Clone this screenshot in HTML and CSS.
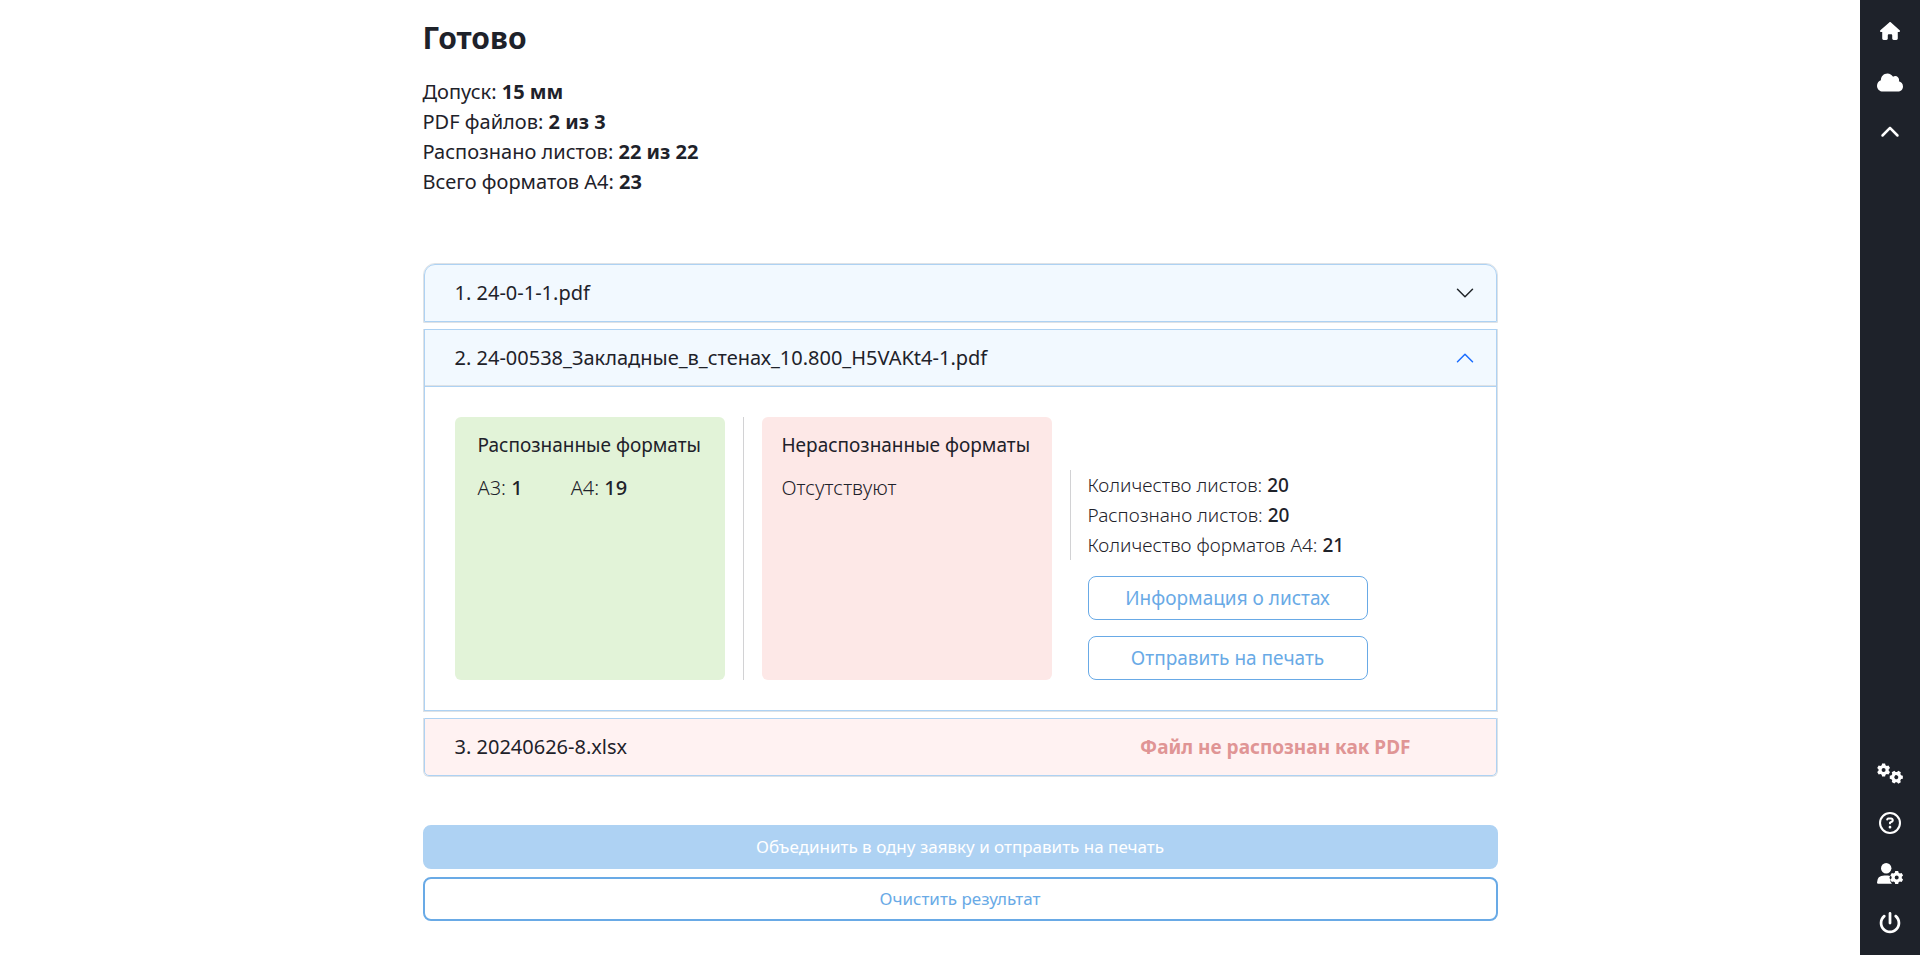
FILE: index.html
```
<!DOCTYPE html>
<html lang="ru">
<head>
<meta charset="utf-8">
<meta name="viewport" content="width=device-width, initial-scale=1">
<title>Готово</title>
<link rel="stylesheet" href="styles.css">
</head>
<body>
<main class="container">
  <h1 class="title">Готово</h1>
  <div class="summary">
    <div>Допуск: <b>15 мм</b></div>
    <div>PDF файлов: <b>2 из 3</b></div>
    <div>Распознано листов: <b>22 из 22</b></div>
    <div>Всего форматов А4: <b>23</b></div>
  </div>

  <div class="accordion">
    <section class="item item-first">
      <button class="item-header" type="button" aria-expanded="false">
        <span>1. 24-0-1-1.pdf</span>
        <svg class="chevron" viewBox="0 0 16 16" aria-hidden="true"><path d="M2 5l6 6 6-6"/></svg>
      </button>
    </section>

    <section class="item">
      <button class="item-header item-header-open" type="button" aria-expanded="true">
        <span>2. 24-00538_Закладные_в_стенах_10.800_H5VAKt4-1.pdf</span>
        <svg class="chevron chevron-open" viewBox="0 0 16 16" aria-hidden="true"><path d="M2 11l6-6 6 6"/></svg>
      </button>
      <div class="item-body">
        <div class="formats formats-ok">
          <h2 class="formats-title">Распознанные форматы</h2>
          <div class="formats-list">
            <span>А3: <b>1</b></span>
            <span>А4: <b>19</b></span>
          </div>
        </div>
        <div class="divider"></div>
        <div class="formats formats-bad">
          <h2 class="formats-title">Нераспознанные форматы</h2>
          <div class="formats-list">Отсутствуют</div>
        </div>
        <div class="details">
          <div class="details-text">
            <div>Количество листов: <b>20</b></div>
            <div>Распознано листов: <b>20</b></div>
            <div>Количество форматов А4: <b>21</b></div>
          </div>
          <div class="details-actions">
            <button class="btn" type="button">Информация о листах</button>
            <button class="btn" type="button">Отправить на печать</button>
          </div>
        </div>
      </div>
    </section>

    <section class="item item-last">
      <div class="item-header item-header-error">
        <span>3. 20240626-8.xlsx</span>
        <strong class="error-text">Файл не распознан как PDF</strong>
      </div>
    </section>
  </div>

  <div class="actions">
    <button class="btn btn-primary" type="button">Объединить в одну заявку и отправить на печать</button>
    <button class="btn btn-outline" type="button">Очистить результат</button>
  </div>
</main>

<nav class="sidebar" aria-label="Меню">
  <div class="sidebar-group">
    <a href="#" class="nav-link" aria-label="Главная"><svg class="icon" viewBox="0 0 576 512"><path d="M575.8 255.5c0 18-15 32.1-32 32.1h-32l.7 160.2c0 2.700-.2 5.400-.5 8.100V472c0 22.100-17.900 40-40 40H456c-1.100 0-2.200 0-3.300-.1c-1.400 .1-2.800 .1-4.200 .1H416 392c-22.100 0-40-17.900-40-40V448 384c0-17.700-14.300-32-32-32H256c-17.700 0-32 14.300-32 32v64 24c0 22.100-17.900 40-40 40H160 128.100c-1.500 0-3-.1-4.500-.2c-1.200 .1-2.400 .2-3.600 .2H104c-22.100 0-40-17.900-40-40V360c0-.9 0-1.900 .1-2.800V287.600H32c-18 0-32-14-32-32.100c0-9 3-17 10-24L266.400 8c7-7 15-8 22-8s15 2 21 7L564.800 231.500c8 7 12 15 11 24z"/></svg></a>
    <a href="#" class="nav-link" aria-label="Облако"><svg class="icon icon-wide" viewBox="0 0 640 512"><path d="M0 336c0 79.500 64.500 144 144 144H512c70.700 0 128-57.300 128-128c0-61.900-44-113.600-102.400-125.400c4.100-10.700 6.400-22.400 6.400-34.600c0-53-43-96-96-96c-19.700 0-38.100 6-53.300 16.200C367 64.200 315.300 32 256 32C167.600 32 96 103.600 96 192c0 2.700 .1 5.400 .2 8.100C40.200 219.800 0 273.200 0 336z"/></svg></a>
    <a href="#" class="nav-link" aria-label="Свернуть"><svg class="icon" viewBox="0 0 512 512"><path d="M233.400 105.400c12.500-12.500 32.800-12.500 45.300 0l192 192c12.500 12.500 12.500 32.800 0 45.300s-32.800 12.500-45.300 0L256 173.300 86.600 342.600c-12.500 12.500-32.800 12.500-45.300 0s-12.500-32.800 0-45.300l192-192z"/></svg></a>
  </div>
  <div class="sidebar-group">
    <a href="#" class="nav-link" aria-label="Настройки"><svg class="icon icon-wide" viewBox="0 0 26 21"><g transform="translate(6.600 7)"><path fill-rule="evenodd" d="M-1.500-6.500h3l.4 1.700 1.300.7 1.700-.5 1.500 2.600-1.300 1.200v1.600l1.300 1.200-1.500 2.600-1.700-.5-1.300.7-.4 1.700h-3l-.4-1.700-1.300-.7-1.700.5L-6.400 2l1.300-1.200V-.8L-6.400-2l1.500-2.600 1.700.5 1.300-.7zM0-2a2 2 0 1 0 0 4 2 2 0 0 0 0-4z"/></g><g transform="translate(19.300 14.200) rotate(30)"><path fill-rule="evenodd" d="M-1.500-6.500h3l.4 1.700 1.300.7 1.700-.5 1.500 2.600-1.300 1.200v1.600l1.300 1.200-1.500 2.600-1.700-.5-1.300.7-.4 1.700h-3l-.4-1.700-1.300-.7-1.700.5L-6.400 2l1.300-1.200V-.8L-6.400-2l1.500-2.600 1.700.5 1.300-.7zM0-2a2 2 0 1 0 0 4 2 2 0 0 0 0-4z"/></g></svg></a>
    <a href="#" class="nav-link" aria-label="Помощь"><svg class="icon icon-round" viewBox="0 0 512 512"><path d="M464 256A208 208 0 1 0 48 256a208 208 0 1 0 416 0zM0 256a256 256 0 1 1 512 0A256 256 0 1 1 0 256zm169.800-90.700c7.900-22.300 29.100-37.300 52.800-37.300h58.300c34.900 0 63.100 28.300 63.100 63.100c0 22.600-12.100 43.500-31.700 54.800L280 264.400c-.2 13-10.900 23.600-24 23.600c-13.300 0-24-10.700-24-24V250.500c0-8.600 4.600-16.500 12.100-20.800l44.300-25.400c4.700-2.700 7.600-7.700 7.600-13.100c0-8.400-6.800-15.100-15.100-15.100H222.600c-3.400 0-6.400 2.100-7.500 5.300l-.4 1.200c-4.400 12.500-18.200 19-30.600 14.600s-19-18.200-14.600-30.600l.4-1.200zM224 352a32 32 0 1 1 64 0 32 32 0 1 1-64 0z"/></svg></a>
    <a href="#" class="nav-link" aria-label="Профиль"><svg class="icon icon-wide" viewBox="0 0 26 21"><circle cx="9.200" cy="5.200" r="5.200"/><path d="M7.400 12.500h3.400q1.300 0 2.500.4-1.300 1-.6 2.600l.9 1.200q-.9 2 .8 3.400l.5.700H1.200Q0 20.800 0 19.600 0 12.500 7.400 12.500z"/><g transform="translate(19.700 14.500)"><path fill-rule="evenodd" d="M-1.500-6.500h3l.4 1.700 1.300.7 1.700-.5 1.500 2.600-1.300 1.200v1.600l1.300 1.200-1.500 2.600-1.700-.5-1.300.7-.4 1.700h-3l-.4-1.700-1.300-.7-1.700.5L-6.400 2l1.300-1.200V-.8L-6.400-2l1.500-2.600 1.700.5 1.300-.7zM0-2a2 2 0 1 0 0 4 2 2 0 0 0 0-4z"/></g></svg></a>
    <a href="#" class="nav-link" aria-label="Выход"><svg class="icon icon-round" viewBox="0 0 512 512"><path d="M288 32c0-17.700-14.300-32-32-32s-32 14.300-32 32V256c0 17.700 14.300 32 32 32s32-14.300 32-32V32zM143.500 120.600c13.600-11.300 15.400-31.500 4.100-45.100s-31.500-15.400-45.100-4.100C49.700 115.400 16 181.800 16 256c0 132.500 107.500 240 240 240s240-107.500 240-240c0-74.200-33.800-140.600-86.600-184.600c-13.600-11.300-33.800-9.400-45.100 4.100s-9.400 33.800 4.100 45.100c38.900 32.300 63.500 81 63.500 135.400c0 97.200-78.800 176-176 176s-176-78.800-176-176c0-54.400 24.700-103.100 63.500-135.400z"/></svg></a>
  </div>
</nav>
</body>
</html>
```
FILE: styles.css
```
*, *::before, *::after {
  box-sizing: border-box;
}

body {
  margin: 0;
  background: #fff;
  color: #1e222a;
  font: 400 20px/30px "Noto Sans", "Open Sans", sans-serif;
}

button {
  font: inherit;
  color: inherit;
  cursor: pointer;
}

b {
  font-weight: 700;
}

.container {
  max-width: 1075px;
  margin: 0 auto;
  padding: 16px 0 32px;
}

.title {
  margin: 0 0 17px;
  font-size: 30px;
  line-height: 44px;
  font-weight: 700;
}

.accordion {
  display: flex;
  flex-direction: column;
  gap: 6px;
  margin-top: 66px;
}

.item {
  border: 1px solid #dee2e6;
  border-top: 0;
}

.item-first {
  border-top: 1px solid #dee2e6;
  border-radius: 12px 12px 0 0;
}

.item-last {
  border-radius: 0 0 6px 6px;
}

.item-header {
  display: flex;
  align-items: center;
  justify-content: space-between;
  width: 100%;
  padding: 13px 21px 13px 30px;
  border: 1px solid #aed2f3;
  background: #f2f9ff;
  text-align: left;
}

.item-first .item-header {
  border-radius: 11px 11px 0 0;
}

.item-header-open {
  box-shadow: inset 0 -1px 0 #dee2e6;
}

.item-header-error {
  padding-right: 85px;
  border-radius: 0 0 5px 5px;
  background: #fff2f2;
}

.error-text {
  color: #e09595;
  font-size: 19px;
}

.chevron {
  width: 20px;
  height: 20px;
  fill: none;
  stroke: #212529;
  stroke-width: 1.2;
  stroke-linecap: round;
  stroke-linejoin: round;
}

.chevron-open {
  stroke: #1a6dff;
}

.item-body {
  display: flex;
  padding: 30px;
  border: 1px solid #aed2f3;
  border-top: 0;
  font-size: 19px;
  font-weight: 300;
}

.item-body b {
  font-weight: 500;
}

.formats {
  border-radius: 6px;
  padding: 13px 20px;
}

.formats-ok {
  flex: 0 0 270px;
  padding: 13px 23px;
  background: #e2f3d8;
}

.formats-bad {
  flex: 0 0 290px;
  background: #fde8e7;
}

.formats-title {
  margin: 0 0 13px;
  font-size: 19px;
  line-height: 30px;
  font-weight: 400;
  white-space: nowrap;
}

.formats-list {
  display: flex;
  gap: 48px;
  font-size: 20px;
}

.divider {
  width: 1px;
  margin: 0 18px;
  background: #d2d2d4;
}

.details {
  display: flex;
  flex-direction: column;
  margin-left: 18px;
  padding-top: 53px;
}

.details-text {
  padding-left: 17px;
  border-left: 1px solid #d2d2d4;
}

.details-actions {
  display: flex;
  flex-direction: column;
  gap: 16px;
  width: 280px;
  margin: 16px 0 0 18px;
}

.btn {
  width: 100%;
  height: 44px;
  padding: 0 12px;
  border: 1px solid #69aae6;
  border-radius: 8px;
  background: transparent;
  color: #69aae6;
  font-weight: 400;
}

.actions {
  display: flex;
  flex-direction: column;
  gap: 8px;
  margin-top: 48px;
}

.btn-primary,
.btn-outline {
  border-width: 2px;
  font-size: 17px;
}

.btn-primary {
  border-color: #aed2f3;
  background: #aed2f3;
  color: #fff;
}

.sidebar {
  position: fixed;
  inset: 0 0 0 auto;
  display: flex;
  flex-direction: column;
  justify-content: space-between;
  width: 60px;
  padding: 6px 0 7px;
  background: #1e222a;
}

.sidebar-group:first-child {
  display: flex;
  flex-direction: column;
  gap: 1px;
}

.nav-link {
  display: flex;
  align-items: center;
  justify-content: center;
  height: 50px;
}

.icon {
  width: 20px;
  height: 20px;
  fill: #fff;
}

.icon-wide {
  width: 26px;
  height: 21px;
}

.icon-round {
  width: 22px;
  height: 22px;
}
```
